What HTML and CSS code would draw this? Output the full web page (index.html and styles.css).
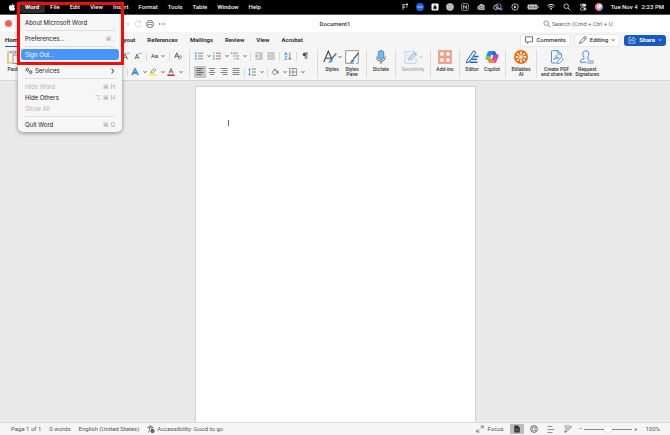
FILE: index.html
```html
<!DOCTYPE html>
<html lang="en">
<head>
<meta charset="utf-8">
<title>Document1</title>
<link rel="stylesheet" href="styles.css">
</head>
<body>
<svg class="defs" aria-hidden="true">
  <symbol id="caret" viewBox="0 0 4 4"><path d="M.6 1.2 2 2.7 3.4 1.2" fill="none" stroke="currentColor" stroke-width=".8"/></symbol>
  <symbol id="search" viewBox="0 0 8 8"><circle cx="3.2" cy="3.2" r="2.3" fill="none" stroke="currentColor" stroke-width=".7"/><path d="m5 5 2.2 2.2" stroke="currentColor" stroke-width=".8"/></symbol>
  <symbol id="list-lines" viewBox="0 0 8 8"><path d="M3 1.2h5M3 4h5M3 6.8h5" stroke="#666" stroke-width=".8"/></symbol>
</svg>

<nav class="menubar">
  <button class="mb-apple" aria-label="Apple menu"><svg class="i8" viewBox="0 0 8 8"><path d="M5.4.2C5.4 1.2 4.7 2 4 2 3.9 1.100 4.600.4 5.400.2ZM4 2.400c.4 0 .9-.4 1.600-.4.6 0 1.100.3 1.400.8-1.200.8-1 2.400.2 2.900C6.800 6.800 6.200 7.800 5.500 7.800c-.5 0-.7-.3-1.300-.3s-.9.3-1.300.3C2 7.800.9 6.100.9 4.500.9 2.900 1.800 2 2.800 2c.5 0 .9.400 1.200.4Z" fill="#fff"/></svg></button>
  <button class="mb-item app">Word</button>
  <button class="mb-item">File</button>
  <button class="mb-item">Edit</button>
  <button class="mb-item">View</button>
  <button class="mb-item">Insert</button>
  <button class="mb-item">Format</button>
  <button class="mb-item">Tools</button>
  <button class="mb-item">Table</button>
  <button class="mb-item">Window</button>
  <button class="mb-item">Help</button>
  <div class="tray">
    <div class="tray-apps">
    <svg class="i8" viewBox="0 0 8 8"><path d="M1.500 1.500h3M1.500 3h3M1.500 4.500h2.500M2 1v6" stroke="#aaa" stroke-width=".9"/><circle cx="6" cy="1.500" r="1" fill="#fff"/><path d="M5 4h1.500" stroke="#aaa"/></svg>
    <svg class="i8" viewBox="0 0 8 8"><circle cx="4" cy="4" r="3.900" fill="#1d62f0"/><path d="M1.400 4.800 2.200 3l.8 1.800M3.700 5V3.200L4.500 4.200 5.300 3.200V5M6 4.900V3.300" stroke="#bcd4ff" stroke-width=".6" fill="none"/></svg>
    <svg class="i8" viewBox="0 0 8 8"><rect x=".5" y=".5" width="7" height="7" rx="1" fill="#fff"/><path d="M4 1.500 6 5H2Z" fill="#111"/><path d="M2.200 5.200h3.600v1H2.200Z" fill="#111"/></svg>
    <svg class="i8" viewBox="0 0 8 8"><circle cx="4" cy="4" r="3.700" fill="#e8e8e8"/><path d="M.3 4h7.400M4 .3v7.400M1 2.200h6M1 5.800h6" stroke="#888" stroke-width=".5"/><ellipse cx="4" cy="4" rx="1.800" ry="3.700" fill="none" stroke="#888" stroke-width=".5"/></svg>
    <svg class="i8" viewBox="0 0 8 8"><rect x=".6" y=".6" width="6.800" height="6.800" rx="1.200" fill="none" stroke="#bbb" stroke-width=".7"/><path d="M2.600 5.800V2.300l2.800 3.400V2.200" fill="none" stroke="#eee" stroke-width=".8"/></svg>
    </div>
    <svg class="i8" viewBox="0 0 8 8"><path d="M.5 3.500 4 .8l3.500 1.400V7h-5L.5 6Z" fill="#ccc"/><circle cx="4.600" cy="4.500" r="1.500" fill="none" stroke="#222" stroke-width=".7"/><path d="M2.200 2.500V6" stroke="#333" stroke-width=".5"/></svg>
    <svg class="i10" viewBox="0 0 10 8"><circle cx="3" cy="4.300" r="2.300" fill="none" stroke="#ddd" stroke-width=".8"/><circle cx="5.500" cy="3.300" r="2.600" fill="none" stroke="#aaa" stroke-width=".8"/><path d="M3 4.500c2 0 3 1.800 5 1.800" stroke="#ddd" stroke-width=".8" fill="none"/><circle cx="8" cy="6" r="1.500" fill="#2389e8"/></svg>
    <svg class="i8" viewBox="0 0 8 8"><circle cx="4" cy="4" r="3.200" fill="none" stroke="#ddd" stroke-width=".8"/><path d="M3 2.400 5.700 4 3 5.600Z" fill="#eee"/></svg>
    <svg class="i12" viewBox="0 0 12 8"><rect x=".5" y="1.500" width="10" height="5" rx="1.400" fill="#d5d5d5"/><path d="M11.500 3v2" stroke="#aaa" stroke-width=".7"/><path d="M2 3h1.600L2 5h1.700M5 3v2h1M7.300 2.300 6.500 4h1.500L7.200 5.700M9 3v2" fill="none" stroke="#222" stroke-width=".6"/></svg>
    <svg class="i8" viewBox="0 0 8 8"><path d="M.4 3C2.400.9 5.600.9 7.600 3M1.700 4.500c1.300-1.300 3.300-1.300 4.600 0" stroke="#fff" stroke-width=".9" fill="none"/><path d="m4 7-1.200-1.400q1.200-.9 2.400 0Z" fill="#fff"/></svg>
    <svg class="i8 white"><use href="#search"/></svg>
    <svg class="i8" viewBox="0 0 8 8"><rect x="1" y=".8" width="6.200" height="2.800" rx="1.400" fill="#ddd"/><circle cx="2.500" cy="2.200" r=".9" fill="#222"/><rect x="1.300" y="4.700" width="5.700" height="2.400" rx="1.200" fill="none" stroke="#ddd" stroke-width=".7"/><circle cx="5.700" cy="5.900" r="1.100" fill="#ddd"/></svg>
    <svg class="i8" viewBox="0 0 8 8"><circle cx="4" cy="4" r="3.700" fill="#f7c8d0"/><path d="M.3 4A3.700 3.700 0 0 1 4 .3V4Z" fill="#f58c55"/><path d="M7.700 4A3.700 3.700 0 0 1 4 7.700V4Z" fill="#7e8cf5"/><path d="M.3 4A3.700 3.700 0 0 0 4 7.700V4Z" fill="#ef5ba5"/><circle cx="4" cy="4" r="2" fill="#fff" opacity=".75"/></svg>
    <span class="clock"><span>Tue Nov 4</span><span>2:23 PM</span></span>
  </div>
</nav>

<header class="titlebar">
  <div class="title-left">
    <button class="close" aria-label="Close"></button>
    <div class="quick">
      <svg class="i4 dim"><use href="#caret"/></svg>
      <svg class="i8" viewBox="0 0 8 8"><path d="M6.500 2.200A3 3 0 1 0 7 4.500M6.600.4v2H4.700" fill="none" stroke="#c4c4c4" stroke-width=".7"/></svg>
      <svg class="i8" viewBox="0 0 8 8"><path d="M2 2.500v-2h4v2M2 6H.6V2.500h6.800V6H6M2 4.500h4v3H2Z" fill="none" stroke="#666" stroke-width=".7"/></svg>
      <svg class="i8" viewBox="0 0 8 8"><g fill="#555"><circle cx="1.500" cy="4" r=".7"/><circle cx="4" cy="4" r=".7"/><circle cx="6.500" cy="4" r=".7"/></g></svg>
    </div>
  </div>
  <h1 class="title">Document1</h1>
  <div class="title-right">
    <label class="search"><svg class="i8"><use href="#search"/></svg><input type="search" aria-label="Search" placeholder="Search (Cmd + Ctrl + U)"></label>
  </div>
</header>

<div class="tabs">
  <nav class="tablist">
    <button class="tab active">Home</button>
    <button class="tab covered">Insert</button>
    <button class="tab covered">Draw</button>
    <button class="tab covered">Design</button>
    <button class="tab">Layout</button>
    <button class="tab">References</button>
    <button class="tab">Mailings</button>
    <button class="tab">Review</button>
    <button class="tab">View</button>
    <button class="tab">Acrobat</button>
  </nav>
  <div class="actions">
    <button class="pill"><svg class="i8" viewBox="0 0 8 8"><path d="M.5.8h7v5H4L2.300 7.400V5.800H.5Z" fill="none" stroke="#333" stroke-width=".7"/></svg>Comments</button>
    <button class="pill"><svg class="i8" viewBox="0 0 8 8"><path d="M.6 7.400 1.200 5.200 5.600.8Q6.400.3 7 1t.2 1.400L2.800 6.800ZM4.800 1.600l1.600 1.600" fill="none" stroke="#333" stroke-width=".7"/></svg>Editing<svg class="i4"><use href="#caret"/></svg></button>
    <button class="pill share"><svg class="i8" viewBox="0 0 8 8"><path d="M3 1.200H1v6h6V5M2.500 5.200Q2.600 2.800 5 2.700V1L7.500 3.300 5 5.200V4Q3.500 3.900 2.500 5.200Z" fill="none" stroke="#cfe0ff" stroke-width=".7"/></svg>Share<svg class="i4"><use href="#caret"/></svg></button>
  </div>
</div>

<div class="ribbon">
  <div class="group paste">
    <button class="big"><svg class="i14" viewBox="0 0 14 14"><path d="M3.500 2H1v11h4M8.500 2H11v2.500" fill="none" stroke="#eda53f" stroke-width="1.200"/><path d="M3.500 3V1.500h1.300Q6 0 7.200 1.500h1.300V3Z" fill="#fff" stroke="#777" stroke-width=".7"/><rect x="6" y="5" width="7" height="8.500" fill="#fff" stroke="#777" stroke-width=".8"/></svg>Paste</button>
  </div>
  <div class="group tools font">
    <div class="row">
      <button class="tool" aria-label="Grow font"><svg class="i8" viewBox="0 0 8 8"><path d="M.8 7.500 3.200 1.500 5.600 7.500M1.600 5.500h3.200" fill="none" stroke="#555" stroke-width=".8"/><path d="m5 1.800 1.200-1.200 1.200 1.200" fill="none" stroke="#2b7cd3" stroke-width=".8"/></svg></button>
      <button class="tool" aria-label="Shrink font"><svg class="i8" viewBox="0 0 8 8"><path d="M1 7 3 2 5 7M1.700 5.500h2.600" fill="none" stroke="#555" stroke-width=".8"/><path d="m5 .8 1.200 1.200L7.400.8" fill="none" stroke="#2b7cd3" stroke-width=".8"/></svg></button>
      <i class="sep"></i>
      <button class="tool combo case">Aa<svg class="i4"><use href="#caret"/></svg></button>
      <i class="sep"></i>
      <button class="tool" aria-label="Clear formatting"><svg class="i8" viewBox="0 0 8 8"><path d="M.6 6 2.800.8 5 6M1.400 4.200h2.800" fill="none" stroke="#444" stroke-width=".8"/><path d="m4.200 6 2-2.400 1.400 1.200-2 2.400Z" fill="#fff" stroke="#a43cc0" stroke-width=".9"/></svg></button>
    </div>
    <div class="row">
      <i class="sep"></i>
      <button class="tool combo" aria-label="Text effects"><svg class="i8" viewBox="0 0 8 8"><path d="M.9 7.200 4 .8l3.100 6.400M2.200 5h3.600" fill="none" stroke="#2477c6" stroke-width="1.500"/><path d="M1 7 4 1l3 6" fill="none" stroke="#a9d2f5" stroke-width=".4"/></svg><svg class="i4"><use href="#caret"/></svg></button>
      <button class="tool combo" aria-label="Highlight"><svg class="i8" viewBox="0 0 8 8"><path d="M2 5V3.500L5.500.4 7 1.800 3.700 5Z" fill="none" stroke="#777" stroke-width=".8"/><path d="M.3 7h7" stroke="#fff200" stroke-width="1.700"/></svg><svg class="i4"><use href="#caret"/></svg></button>
      <button class="tool combo" aria-label="Font colour"><svg class="i8" viewBox="0 0 8 8"><path d="M2 5.400 4 .6l2 4.800M2.700 3.800h2.600" fill="none" stroke="#555" stroke-width=".8"/><path d="M.4 7.200h7.200" stroke="#e02020" stroke-width="1.500"/></svg><svg class="i4"><use href="#caret"/></svg></button>
    </div>
  </div>
  <div class="group tools">
    <div class="row">
      <button class="tool combo" aria-label="Bullets"><svg class="i8" viewBox="0 0 8 8"><path d="M0 1.200h1.500M0 4h1.500M0 6.800h1.500" stroke="#2b88d8" stroke-width="1.400"/><use href="#list-lines"/></svg><svg class="i4"><use href="#caret"/></svg></button>
      <button class="tool combo" aria-label="Numbering"><svg class="i8" viewBox="0 0 8 8"><path d="M.8 0v2M.3 3.200h1v.8L.3 5h1M.3 6h1v1.600h-1" fill="none" stroke="#2b88d8" stroke-width=".6"/><use href="#list-lines"/></svg><svg class="i4"><use href="#caret"/></svg></button>
      <button class="tool combo" aria-label="Multilevel list"><svg class="i8" viewBox="0 0 8 8"><path d="M0 1.200h1.200M2 4h1.200M3.500 6.800h1" stroke="#2b88d8" stroke-width="1.200"/><path d="M2 1.200h5M4 4h4M5.500 6.800H8" stroke="#777" stroke-width=".8"/></svg><svg class="i4"><use href="#caret"/></svg></button>
      <i class="sep"></i>
      <button class="tool" aria-label="Decrease indent"><svg class="i8" viewBox="0 0 8 8"><path d="M.3 1h7.400M4 3h3.700M4 5h3.700M.3 7h7.400" stroke="#777" stroke-width=".7"/><path d="M3.200 4H.6M1.700 2.800.5 4l1.200 1.200" fill="none" stroke="#2b88d8" stroke-width=".8"/></svg></button>
      <button class="tool" aria-label="Increase indent"><svg class="i8" viewBox="0 0 8 8"><path d="M.3 1h7.400M4 3h3.700M4 5h3.700M.3 7h7.400" stroke="#777" stroke-width=".7"/><path d="M.3 4h2.600M1.800 2.800 3 4 1.800 5.200" fill="none" stroke="#2b88d8" stroke-width=".8"/></svg></button>
      <i class="sep"></i>
      <button class="tool" aria-label="Sort"><svg class="i8" viewBox="0 0 8 8"><path d="M.5 3.300 1.900.3l1.400 3M1 2.400h1.800M.7 4.800h2.400L.7 7.600h2.600" fill="none" stroke="#2b88d8" stroke-width=".7"/><path d="M5.800.4v7M4.400 6l1.400 1.500L7.200 6" fill="none" stroke="#555" stroke-width=".7"/></svg></button>
      <i class="sep"></i>
      <button class="tool" aria-label="Show marks"><svg class="i8" viewBox="0 0 8 8"><path d="M4 1h3M4.300 1v6M5.900 1v6" stroke="#444" stroke-width=".7"/><path d="M4.300.7H3.500a1.700 1.700 0 0 0 0 3.500h.8Z" fill="#444"/></svg></button>
    </div>
    <div class="row">
      <button class="tool on" aria-label="Align left"><svg class="i8" viewBox="0 0 8 8"><path d="M.5.5h7M.5 2.500h5M.5 4.500h7M.5 6.500h5" stroke="#555" stroke-width=".8"/></svg></button>
      <button class="tool" aria-label="Centre"><svg class="i8" viewBox="0 0 8 8"><path d="M.7.5h6.600M2 2.500h4M.7 4.500h6.600M2 6.500h4" stroke="#666" stroke-width=".8"/></svg></button>
      <button class="tool" aria-label="Align right"><svg class="i8" viewBox="0 0 8 8"><path d="M.5.5h7M2.500 2.500h5M.5 4.500h7M2.500 6.500h5" stroke="#666" stroke-width=".8"/></svg></button>
      <button class="tool" aria-label="Justify"><svg class="i8" viewBox="0 0 8 8"><path d="M.5.5h7M.5 2.500h7M.5 4.500h7M.5 6.500h7" stroke="#666" stroke-width=".8"/></svg></button>
      <i class="sep"></i>
      <button class="tool combo" aria-label="Line spacing"><svg class="i8" viewBox="0 0 8 8"><path d="M1.500.8v6.400M.3 2 1.500.7 2.700 2M.3 6l1.200 1.300L2.700 6" fill="none" stroke="#2b88d8" stroke-width=".7"/><path d="M4 1h4M4 4h4M4 7h4" stroke="#666" stroke-width=".8"/></svg><svg class="i4"><use href="#caret"/></svg></button>
      <i class="sep"></i>
      <button class="tool combo" aria-label="Shading"><svg class="i8" viewBox="0 0 8 8"><path d="M1 4.400 3.800 1.500l2.700 2.700L3.700 7ZM3.800 3V.5" fill="none" stroke="#666" stroke-width=".8"/><path d="M6.200 2.400Q8.200 4.600 7.200 5.300T6.200 2.400Z" fill="#2b88d8" stroke="#2b88d8" stroke-width=".6"/></svg><svg class="i4"><use href="#caret"/></svg></button>
      <button class="tool combo" aria-label="Borders"><svg class="i8" viewBox="0 0 8 8"><path d="M.5.5h7v7h-7ZM4 .5v7M.5 4h7" fill="none" stroke="#777" stroke-width=".7"/></svg><svg class="i4"><use href="#caret"/></svg></button>
    </div>
  </div>
  <div class="group styles">
    <button class="big"><span class="pic"><svg class="i14" viewBox="0 0 14 14"><path d="M.8 12 5.300 1.200 9 9.500M2.500 8.300h5.800" fill="none" stroke="#444" stroke-width="1.100"/><path d="m13.300 3.500-4.500 5" stroke="#666" stroke-width="1.300"/><path d="M5 12.800q1.500-.5 1.700-2.400t2.400-1.600q1.500 2.500-1 3.500T5 12.800Z" fill="#3c94dc"/></svg><svg class="i4"><use href="#caret"/></svg></span>Styles</button>
    <button class="big"><svg class="i14" viewBox="0 0 14 14"><path d="M9 13.300H.7V.7h12.600V13.300H11" fill="#fff" stroke="#777" stroke-width=".8"/><path d="M13.500 3 8.500 9" stroke="#555" stroke-width="1.200"/><path d="M4.500 13q1.500-.4 1.700-2.400t2.400-1.600q1.500 2.500-1 3.500T4.500 13Z" fill="#3c94dc"/></svg>Styles<br>Pane</button>
  </div>
  <div class="group dictate">
    <button class="big"><svg class="i14" viewBox="0 0 14 14"><rect x="4.200" y=".4" width="5.600" height="9" rx="2.800" fill="#76b5e8" stroke="#3681bd" stroke-width=".8"/><path d="M2.800 6.500q0 4.700 4.200 4.700t4.200-4.700M7 11.200V14" fill="none" stroke="#555" stroke-width=".9"/></svg>Dictate</button>
  </div>
  <div class="group sensitivity">
    <button class="big" disabled><span class="pic"><svg class="i14" viewBox="0 0 14 14"><path d="M7.500 1.500H1v11.800h11V8M3 5h2M3 8h3" fill="none" stroke="#b3d4ee" stroke-width=".9"/><path d="M5.500 7.500 10 2.800l2 2L7.500 9.500 5 10ZM9 .8l4 4" fill="#d4e7f5" stroke="#9dc6e5" stroke-width="1.200"/></svg><svg class="i4"><use href="#caret"/></svg></span>Sensitivity</button>
  </div>
  <div class="group dictate">
    <button class="big"><svg class="i14" viewBox="0 0 14 14"><rect width="14" height="14" fill="#f3a58f"/><path d="M2 2h4v4H2ZM8 2h4v4H8ZM2 8h4v4H2ZM8 8h4v4H8Z" fill="#fff" stroke="#dd8069" stroke-width=".5"/></svg>Add-ins</button>
  </div>
  <div class="group editor">
    <button class="big"><svg class="i14" viewBox="0 0 14 14"><path d="M2 10.500 8.500.8l2.500 1.700-6.500 9-3 1.500Z" fill="#e4f0ff" stroke="#185abd" stroke-width="1"/><path d="M8 6.500h5.500M6.500 9.300H12M4.500 12.300h8" stroke="#2266d0" stroke-width="1.500"/></svg>Editor</button>
    <button class="big"><svg class="i14" viewBox="0 0 14 14"><path d="M4.500 1h4.200Q10 1 10.500 2.500l.6 2H8.300L6.500 10H2.300Q.2 9.800.8 7.200L2.500 2.600Q3 1 4.500 1Z" fill="#1a8fe3"/><path d="M1.500 5.500.8 7.500Q.3 10 2.300 10h4.200l1-3Z" fill="#8bc53f"/><path d="M9.500 13H5.300Q4 13 3.500 11.500l-.6-2h2.800L7.500 4h4.200q2.100.2 1.500 2.800l-1.700 4.600Q11 13 9.500 13Z" fill="#e5489a"/><path d="M7.500 4h4.200q2.100.2 1.500 2.800L12.500 8.700 6.500 7Z" fill="#a44bd8"/><path d="m2.900 9.500.6 2Q4 13 5.300 13H9L10 11l-4.300-1.500Z" fill="#f58a36"/><path d="M6.300 5h1.800L7.200 8.700H5.500Z" fill="#fff"/><path d="M8.500 1Q10 1 10.500 2.500l.6 2H8Z" fill="#2451c7"/></svg>Copilot</button>
  </div>
  <div class="group billables">
    <button class="big"><svg class="i14" viewBox="0 0 14 14"><circle cx="7" cy="7" r="7" fill="#f26a0a"/><path d="M7 2.500v9M2.500 7h9M3.800 3.800l6.400 6.400M10.200 3.800l-6.400 6.400" stroke="#fff" stroke-width=".8"/><g fill="#fff"><circle cx="7" cy="2.600" r="1"/><circle cx="7" cy="11.400" r="1"/><circle cx="2.600" cy="7" r="1"/><circle cx="11.400" cy="7" r="1"/><circle cx="3.900" cy="3.900" r="1"/><circle cx="10.100" cy="10.100" r="1"/><circle cx="10.100" cy="3.900" r="1"/><circle cx="3.900" cy="10.100" r="1"/></g></svg>Billables<br>AI</button>
  </div>
  <div class="group acrobat">
    <button class="big"><svg class="i14" viewBox="0 0 14 14"><path d="M6.500 13H2.300Q1.500 13 1.500 12V1.500Q1.500.7 2.300.7H8l3.500 3.500V7M8 .7v3.500h3.500" fill="none" stroke="#3f82e0" stroke-width=".9"/><path d="M3.500 9.500Q6.500 8 6.300 5 6.500 8 9.300 8.300 6 8 3.500 9.500Z" fill="none" stroke="#3f82e0" stroke-width=".7"/><path d="m7.500 11.500 4-4 1.800 1.800-4 4-2 .2Z" fill="#fff" stroke="#3f82e0" stroke-width=".8"/></svg>Create PDF<br>and share link</button>
    <button class="big"><svg class="i14" viewBox="0 0 14 14"><path d="M6 12.300H.5V11q0-1.700 3.500-2.300V7.500Q2.800 6 2.800 4q0-3.200 3-3.200t3 3.200q0 2-1.300 3.500v1.200l2 .6" fill="none" stroke="#3f82e0" stroke-width=".9"/><path d="M7 13h7M8 11.500q1.500-2 1.800-.5t1.200 0 1 .2H13.500" fill="none" stroke="#3f82e0" stroke-width=".8"/></svg>Request<br>Signatures</button>
  </div>
</div>

<main class="canvas">
  <article class="page"><div class="cursor"></div></article>
</main>

<footer class="status">
  <span>Page 1 of 1</span>
  <span>0 words</span>
  <span>English (United States)</span>
  <span class="with-icon"><svg class="i8" viewBox="0 0 8 8"><circle cx="3.500" cy="1.200" r=".8" fill="none" stroke="#555" stroke-width=".6"/><path d="M.5 2.300 2.500 3v2L1.500 7.500M6.500 2.300 4.700 3v1M.5 2.300h6" fill="none" stroke="#555" stroke-width=".7"/><circle cx="5.500" cy="5.900" r="2" fill="#444"/><path d="m4.600 5.900.7.700 1.200-1.300" fill="none" stroke="#fff" stroke-width=".5"/></svg>Accessibility: Good to go</span>
  <div class="views">
    <button class="with-icon focus"><svg class="i8" viewBox="0 0 8 8"><path d="M4.700 1h2.500v2.500M7 1.200 4.700 3.500M3.300 7H.8V4.500M1 6.800l2.300-2.300" fill="none" stroke="#555" stroke-width=".7"/></svg>Focus</button>
    <button class="view on" aria-label="Print layout"><svg class="i8" viewBox="0 0 8 8"><path d="M1.300.5h3.500L6.800 2.600v4.900H1.300Z" fill="#333"/><path d="M2.500 4h3M2.500 5.500h3" stroke="#999" stroke-width=".5"/></svg></button>
    <button class="view" aria-label="Web layout"><svg class="i8" viewBox="0 0 8 8"><circle cx="4" cy="4" r="3.500" fill="none" stroke="#555" stroke-width=".7"/><ellipse cx="4" cy="4" rx="1.700" ry="3.500" fill="none" stroke="#666" stroke-width=".5"/><path d="M.8 2.700h6.400M.8 5.300h6.400" stroke="#666" stroke-width=".5"/></svg></button>
    <button class="view" aria-label="Outline"><svg class="i8" viewBox="0 0 8 8"><path d="M.5 1.500h5M.5 4.500h7M.5 7.500h5" stroke="#777" stroke-width=".8"/></svg></button>
    <button class="view" aria-label="Draft"><svg class="i8" viewBox="0 0 8 8"><path d="M.5 1h5M.5 3h3M1.500 7.300 2 5.500 6.500 1l1 1L3 6.500ZM1 5v2.500" fill="none" stroke="#666" stroke-width=".7"/></svg></button>
  </div>
  <div class="zoom">
    <button aria-label="Zoom out">−</button>
    <input type="range" aria-label="Zoom" min="0" max="200" value="100">
    <button aria-label="Zoom in">+</button>
    <span class="percent">100%</span>
  </div>
</footer>

<div class="menu" role="menu">
  <button role="menuitem">About Microsoft Word</button>
  <hr>
  <button role="menuitem">Preferences...<kbd>⌘ ,</kbd></button>
  <hr>
  <button role="menuitem" class="selected">Sign Out...</button>
  <hr>
  <button role="menuitem" class="services"><svg class="i8" viewBox="0 0 8 8"><circle cx="2.300" cy="2.700" r="1.300" fill="none" stroke="#444" stroke-width="1"/><circle cx="5.600" cy="5.200" r="1.300" fill="none" stroke="#444" stroke-width="1"/></svg>Services<svg class="i8 arrow" viewBox="0 0 8 8"><path d="M4.500 1.700 6.600 4 4.500 6.300" fill="none" stroke="#222"/></svg></button>
  <hr>
  <button role="menuitem" disabled>Hide Word<kbd>⌘ H</kbd></button>
  <button role="menuitem">Hide Others<kbd>⌥ ⌘ H</kbd></button>
  <button role="menuitem" disabled>Show All</button>
  <hr>
  <button role="menuitem">Quit Word<kbd>⌘ Q</kbd></button>
</div>
<div class="highlight"></div>
</body>
</html>
```
FILE: styles.css
```css
* { box-sizing: border-box; }
html, body { height: 100%; }
body {
  margin: 0;
  display: flex;
  flex-direction: column;
  overflow: hidden;
  font-family: Roboto, "Liberation Sans", sans-serif;
  font-size: 6px;
  line-height: 8px;
  color: #333;
  background: #e9e9e9;
}
button, input {
  font: inherit;
  color: inherit;
  border: 0;
  padding: 0;
  margin: 0;
  background: none;
}
svg { display: block; flex: none; }
.defs { position: absolute; width: 0; height: 0; }
.i4 { width: 4px; height: 4px; }
.i8 { width: 8px; height: 8px; }
.i10 { width: 10px; height: 8px; }
.i12 { width: 12px; height: 8px; }
.i14 { width: 14px; height: 14px; }
.dim { color: #999; }
.white { color: #fff; }

.menubar {
  display: flex;
  align-items: center;
  flex: none;
  height: 15px;
  padding: 0 6px 0 8px;
  background: #000;
  border-bottom: 1px solid #555;
  color: #f4f4f4;
  font-weight: 500;
}
.mb-apple { margin-right: 3px; }
.mb-item { padding: 2px 5px; }
.mb-item.app {
  padding: 2px 6px;
  border-radius: 3px;
  background: #2c2c2c;
  font-weight: 700;
}
.tray {
  display: flex;
  align-items: center;
  gap: 8px;
  margin-left: auto;
}
.tray-apps { display: flex; gap: 7px; }
.clock { display: flex; gap: 4px; }

.titlebar {
  display: grid;
  grid-template-columns: 1fr auto 1fr;
  align-items: center;
  flex: none;
  height: 17px;
  background: #fff;
}
.title-left { display: flex; align-items: center; }
.close {
  width: 7px;
  height: 7px;
  margin-left: 5px;
  border-radius: 50%;
  background: #fe5f57;
}
.quick { display: flex; align-items: center; gap: 4px; margin-left: 114px; }
.title { margin: 0; font-size: 6px; font-weight: 500; }
.title-right { display: flex; justify-content: flex-end; padding-right: 48px; }
.search { display: flex; align-items: center; gap: 1px; color: #666; }
.search input { width: 70px; outline: 0; appearance: none; }
.search input::placeholder { color: #666; opacity: 1; }

.tabs {
  display: flex;
  justify-content: space-between;
  align-items: center;
  flex: none;
  height: 16px;
  padding: 0 4px 0 5px;
  background: #f5f5f5;
}
.tablist { display: flex; gap: 12px; }
.tab { height: 13px; font-weight: 700; border-bottom: 1px solid transparent; }
.tab.active { border-color: #185abd; color: #222; }
.tab.covered { visibility: hidden; }
.actions { display: flex; gap: 5px; }
.pill {
  display: flex;
  align-items: center;
  gap: 3px;
  height: 11px;
  padding: 0 4px;
  border-radius: 3px;
  background: #fff;
  box-shadow: 0 0 1px 1px #e6e6e6;
  font-weight: 500;
}
.share { background: #185abd; color: #fff; font-weight: 700; box-shadow: none; }

.ribbon {
  display: flex;
  flex: none;
  height: 33px;
  background: #f5f5f5;
  border-bottom: 1px solid #d6d6d6;
}
.group { display: flex; }
.group::after {
  content: "";
  align-self: center;
  width: 1px;
  height: 28px;
  margin-left: auto;
  background: #dcdcdc;
}
.paste { width: 30px; padding-left: 4px; }
.paste::after, .acrobat::after { display: none; }
.tools { display: grid; grid-template-columns: 1fr 1px; width: 128px; padding-left: 4px; }
.tools .row { grid-column: 1; }
.tools::after { grid-column: 2; grid-row: 1 / 3; }
.font { width: 160px; padding-left: 0; }
.font .row { justify-content: flex-end; padding-right: 5px; }
.row { display: flex; align-items: center; height: 16px; }
.tool {
  display: flex;
  align-items: center;
  justify-content: center;
  width: 12px;
  height: 12px;
}
.combo { width: 18px; gap: 4px; }
.case { gap: 3px; }
.tool.on { background: #c6c6c6; border-radius: 1px; }
.sep { width: 1px; height: 9px; margin: 0 2px; background: #dadada; }
.big {
  display: flex;
  flex-direction: column;
  align-items: center;
  min-width: 20px;
  padding-top: 2px;
  font-size: 5px;
  line-height: 5px;
  font-weight: 500;
  text-align: center;
  white-space: nowrap;
}
.big .i14 { margin-bottom: 3px; }
.big:disabled { color: #aaa; }
.pic { display: flex; gap: 1px; }
.pic .i4 { margin-top: 5px; }
.styles { width: 49px; padding-left: 4px; }
.dictate { width: 29px; }
.sensitivity { width: 35px; }
.editor { width: 46px; padding-left: 2px; }
.billables { width: 31px; }
.dictate .big, .sensitivity .big, .billables .big { flex: 1; }
.acrobat { padding-left: 4px; gap: 3px; }

.canvas {
  display: flex;
  justify-content: center;
  flex: 1;
  min-height: 0;
  padding-top: 6px;
  background: #e9e9e9;
}
.page {
  width: 279px;
  padding: 33px 32px;
  background: #fff;
  box-shadow: 0 0 1px 1px #d4d4d4;
}
.cursor { width: 1px; height: 6px; background: #666; }

.status {
  display: flex;
  align-items: center;
  gap: 8px;
  flex: none;
  height: 13px;
  padding: 0 10px 0 11px;
  background: #f5f5f5;
  border-top: 1px solid #dadada;
  color: #555;
}
.with-icon { display: flex; align-items: center; gap: 2px; }
.views { display: flex; align-items: center; gap: 3px; margin-left: auto; }
.focus { margin-right: 3px; gap: 3px; }
.view { display: flex; align-items: center; justify-content: center; width: 14px; height: 10px; }
.view.on { background: #bdbdbd; border-radius: 1px; }
.zoom { display: flex; align-items: center; gap: 2px; margin-left: -4px; }
.zoom input { width: 48px; height: 8px; appearance: none; }
.zoom input::-webkit-slider-runnable-track { height: 1px; background: #888; }
.zoom input::-webkit-slider-thumb {
  appearance: none;
  width: 8px;
  height: 6px;
  margin-top: -3px;
  border-radius: 3px;
  background: #fff;
  box-shadow: 0 0 1px #999;
}
.percent { margin-left: 6px; }

.menu {
  position: absolute;
  top: 14px;
  left: 18px;
  width: 104px;
  padding: 3px 3px 2px;
  border-radius: 0 0 5px 5px;
  background: #f6f6f6;
  box-shadow: 0 1px 4px rgba(0, 0, 0, .4);
  color: #222;
  font-family: Inter, "Liberation Sans", sans-serif;
}
.menu button {
  display: flex;
  align-items: center;
  width: 100%;
  height: 11px;
  padding: 0 4px;
  border-radius: 3px;
}
.menu button:disabled { color: #b5b5b5; }
.menu hr { margin: 2px 4px; border: 0; height: 1px; background: #dedede; }
.menu kbd { margin-left: auto; font: inherit; color: #aaa; }
.menu .selected { background: #4a95fa; color: #fff; }
.menu .services { gap: 2px; }
.menu .arrow { margin-left: auto; }
.highlight {
  position: absolute;
  top: 2px;
  left: 17px;
  width: 107px;
  height: 63px;
  border: 3px solid #f80a0a;
  pointer-events: none;
}
```
